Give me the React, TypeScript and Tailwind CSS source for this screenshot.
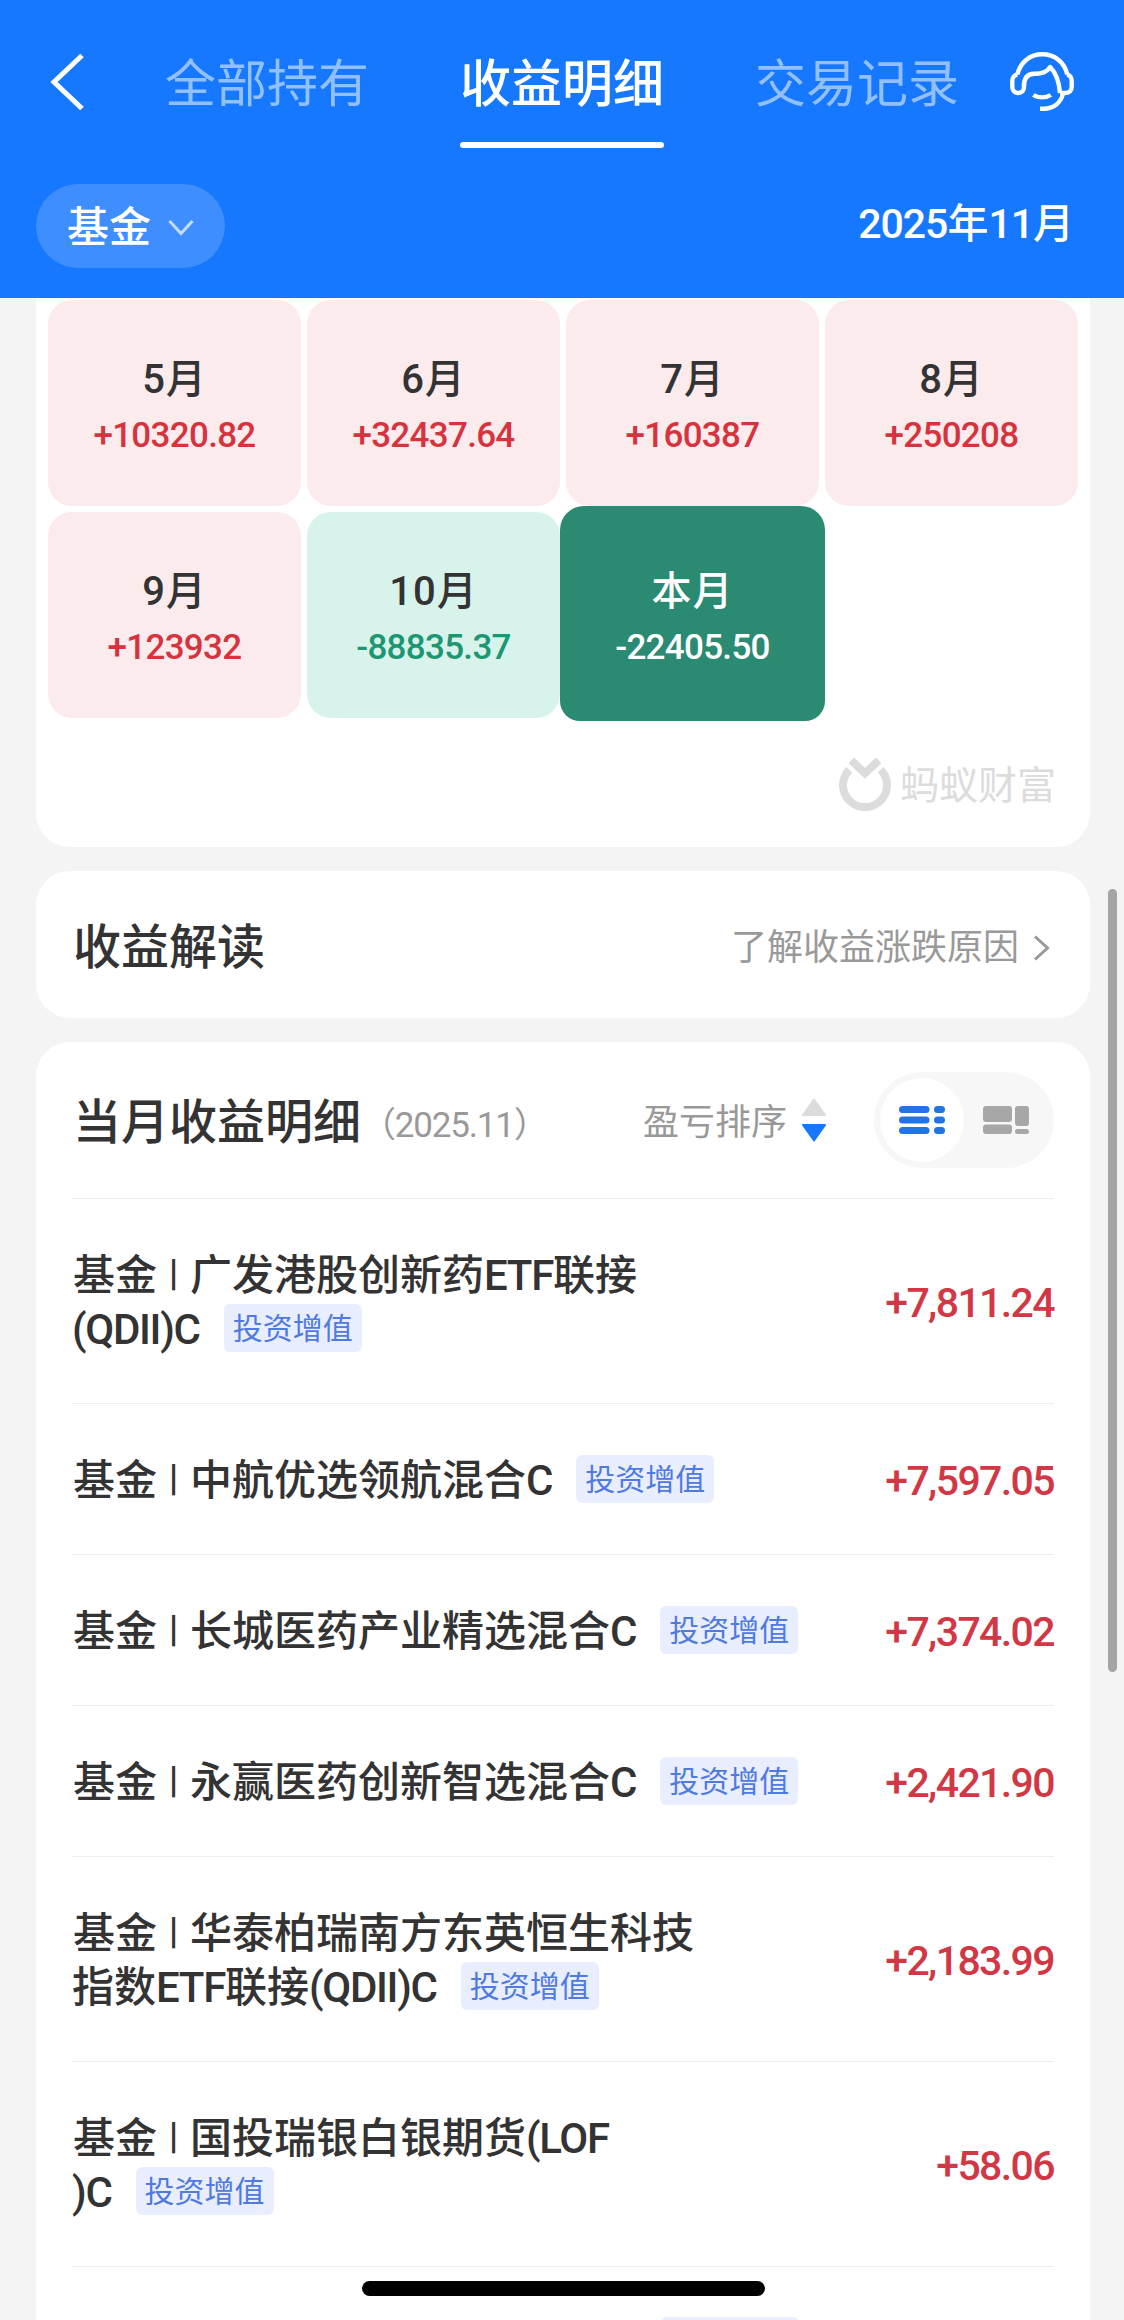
import { Fragment } from "react";
import clsx from "clsx";

type Month = {
  label: string;
  amount: string;
  tone: "up" | "down" | "current";
};

type Fund = {
  lines: string[];
  amount: string;
};

const MONTHS: Month[] = [
  { label: "5月", amount: "+10320.82", tone: "up" },
  { label: "6月", amount: "+32437.64", tone: "up" },
  { label: "7月", amount: "+160387", tone: "up" },
  { label: "8月", amount: "+250208", tone: "up" },
  { label: "9月", amount: "+123932", tone: "up" },
  { label: "10月", amount: "-88835.37", tone: "down" },
  { label: "本月", amount: "-22405.50", tone: "current" },
];

const FUNDS: Fund[] = [
  { lines: ["广发港股创新药ETF联接", "(QDII)C"], amount: "+7,811.24" },
  { lines: ["中航优选领航混合C"], amount: "+7,597.05" },
  { lines: ["长城医药产业精选混合C"], amount: "+7,374.02" },
  { lines: ["永赢医药创新智选混合C"], amount: "+2,421.90" },
  { lines: ["华泰柏瑞南方东英恒生科技", "指数ETF联接(QDII)C"], amount: "+2,183.99" },
  { lines: ["国投瑞银白银期货(LOF", ")C"], amount: "+58.06" },
];

const TABS = ["全部持有", "收益明细", "交易记录"];

// Latin letters and digits are set tighter than the Chinese characters around them
function MixedText({ text }: { text: string }) {
  return (
    <>
      {text.split(/([\x21-\x7e]+)/).map((part, i) =>
        i % 2 === 1 ? (
          <span key={i} className="tracking-[-1.3px]">
            {part}
          </span>
        ) : (
          part
        )
      )}
    </>
  );
}

function HeadsetIcon() {
  return (
    <svg className="h-[60px] w-[64px]" viewBox="0 0 64 60" fill="none" stroke="currentColor" strokeWidth="4.4" strokeLinejoin="round">
      <path d="M7.3 22.5C10.500 10 20 2.300 32.300 2.300S54.500 10 57.300 22.500" />
      <path d="M14 34C14 25.500 18 22 24 21.800C32 21.600 36.500 20.500 40.200 15C46 21 49 28 50 41" />
      <path d="M7.500 22.500C4 23 2.300 26 2.300 29V34.500C2.300 38.500 4.500 41 8.200 41S14 38.500 14 35V31" />
      <path d="M57 22.500C60 23 61.700 26 61.700 29V34.500C61.700 38.500 59.500 41 55.500 41H50" />
      <path d="M53 41C51.500 50.500 43.500 56.700 33.500 56.700H30" />
      <path d="M23.300 43C28 46.200 36 46.200 40.800 43" />
    </svg>
  );
}

function ListIcon() {
  return (
    <svg className="h-[28px] w-[46px]" viewBox="0 0 46 28" fill="#2273e6">
      <rect x="0" y="0" width="30.500" height="7" rx="3.500" />
      <rect x="0" y="10.500" width="30.500" height="7" rx="3.500" />
      <rect x="0" y="21" width="30.500" height="7" rx="3.500" />
      <rect x="35" y="0" width="11" height="7" rx="3.500" />
      <rect x="35" y="10.500" width="11" height="7" rx="3.500" />
      <rect x="35" y="21" width="11" height="7" rx="3.500" />
    </svg>
  );
}

function BlocksIcon() {
  return (
    <svg className="h-[28px] w-[46px]" viewBox="0 0 46 28" fill="#a7a7a7">
      <rect x="0" y="0" width="29" height="16" rx="3" />
      <rect x="0" y="18.500" width="29" height="9.500" rx="3" />
      <rect x="32" y="0" width="14" height="20" rx="3" />
      <rect x="32" y="23" width="14" height="5" rx="2.500" />
    </svg>
  );
}

function Watermark() {
  return (
    <div className="flex items-center text-[#dcdcdc]">
      <svg className="h-[54px] w-[52px]" viewBox="0 0 52 54" fill="none" stroke="currentColor">
        <path d="M10.300 12.700A22 22 0 1 0 41.700 12.700" strokeWidth="8" />
        <path d="M12.300 3.300L26 16.300L39.700 3.300" strokeWidth="8" />
      </svg>
      <span className="ml-[9px] pt-1 text-[39px] leading-[54px] font-normal">蚂蚁财富</span>
    </div>
  );
}

function Tag() {
  return (
    <span className="inline-flex h-[48px] w-[138px] items-center justify-center rounded-[6px] bg-[#e9eeff] pt-[2px] text-[30px] leading-[46px] font-normal text-[#4f7ae2]">
      投资增值
    </span>
  );
}

function Header() {
  return (
    <header className="h-[298px] bg-[#1677ff] text-white">
      <div className="flex h-[164px] items-center pl-[50px]">
        <svg className="h-[56px] w-[34px]" viewBox="0 0 34 56" fill="none" stroke="currentColor" strokeWidth="5">
          <path d="M32 1.500L4 28L32 54.500" />
        </svg>
        <nav className="ml-[81px] flex gap-[91px] pt-[6px]">
          {TABS.map((tab, i) => (
            <div
              key={tab}
              className={clsx(
                "relative w-[204px] text-[51px] leading-[60px]",
                i === 1 ? "font-medium" : "font-normal text-[#92c0ff]"
              )}
            >
              {tab}
              {i === 1 && <span className="absolute top-[87px] left-0 h-[6px] w-full rounded-full bg-white" />}
            </div>
          ))}
        </nav>
        <div className="ml-[51px]">
          <HeadsetIcon />
        </div>
      </div>
      <div className="mt-5 flex items-center justify-between pr-[50px] pl-[36px]">
        <button className="flex h-[84px] w-[189px] items-center rounded-full bg-[#3f8eff] pt-1 pl-[31px] text-[42px] leading-[60px] font-medium">
          基金
          <svg className="ml-[17px] h-[18px] w-[26px]" viewBox="0 0 26 18" fill="none" stroke="#c4ddff" strokeWidth="3">
            <path d="M1.500 2L13 14.500L24.500 2" />
          </svg>
        </button>
        <span className="mb-1 text-[41px] leading-[60px] font-medium">
          <span className="tracking-[-1px]">2025</span>年<span className="tracking-[-1px]">11</span>月
        </span>
      </div>
    </header>
  );
}

function MonthCell({ label, amount, tone }: Month) {
  return (
    <div
      className={clsx(
        "flex flex-col items-center rounded-[24px]",
        tone === "up" && "bg-[#fbebed] pt-[52px] text-[#d6333f]",
        tone === "down" && "bg-[#d8f3ec] pt-[52px] text-[#1d9672]",
        tone === "current" && "-mx-[6px] -mt-[6px] -mb-[3px] rounded-b-[20px] bg-[#2b8a72] pt-[58px] text-white"
      )}
    >
      <span className={clsx("text-[40px] leading-[56px] font-medium tracking-[1px]", tone !== "current" && "text-[#333]")}>
        {label}
      </span>
      <span className="text-[35px] leading-[56px] font-medium tracking-[-0.7px]">{amount}</span>
    </div>
  );
}

function FundRow({ lines, amount }: Fund) {
  return (
    <li className="flex items-center justify-between border-t border-[#eee] pt-[50px] pb-[46px]">
      <div className="text-[42px] leading-[54px] font-medium whitespace-nowrap text-[#333]">
        <span className="ml-px">基金</span>
        <span className="inline-block w-[33px] text-center align-top text-[36px] leading-[49px] font-bold">|</span>
        {lines.map((line, i) => (
          <Fragment key={line}>
            {i > 0 && <br />}
            <MixedText text={line} />
          </Fragment>
        ))}
        <span className="ml-[24px] inline-flex h-[50px] items-center align-top">
          <Tag />
        </span>
      </div>
      <span className="text-[41px] leading-[54px] font-medium tracking-[-1.6px] text-[#d13744]">{amount}</span>
    </li>
  );
}

export default function App() {
  return (
    <div className="relative h-[2320px] w-[1124px] overflow-hidden bg-[#f4f4f5] font-[Roboto,'Noto_Sans_CJK_SC',sans-serif]">
      <Header />

      <main className="flex flex-col gap-6 pr-[34px] pl-[36px]">
        <section className="h-[549px] rounded-b-[34px] bg-white px-[12px] pt-[2px]">
          <div className="grid auto-rows-[206px] grid-cols-4 gap-[6px]">
            {MONTHS.map((month) => (
              <MonthCell key={month.label} {...month} />
            ))}
          </div>
          <div className="mt-[37px] flex justify-end pr-[22px]">
            <Watermark />
          </div>
        </section>

        <section className="flex h-[147px] items-center justify-between rounded-[34px] bg-white pt-[6px] pr-[40px] pl-[37px]">
          <h2 className="text-[48px] leading-[60px] font-medium text-[#333]">收益解读</h2>
          <div className="flex items-center text-[36px] leading-[60px] text-[#999]">
            了解收益涨跌原因
            <svg className="ml-[14px] h-[26px] w-[17px]" viewBox="0 0 17 26" fill="none" stroke="currentColor" strokeWidth="3">
              <path d="M2 1.500L14.500 13L2 24.500" />
            </svg>
          </div>
        </section>

        <section className="h-[1400px] rounded-t-[34px] bg-white px-[36px]">
          <div className="flex h-[156px] items-center">
            <h2 className="pt-[6px] pl-px text-[48px] leading-[60px] font-medium text-[#333]">当月收益明细</h2>
            <span className="mt-3 text-[35px] leading-[60px] font-normal tracking-[-1.2px] text-[#999]">（2025.11）</span>
            <div className="ml-auto flex items-center text-[36px] leading-[60px] text-[#999]">
              <span className="pt-[6px]">盈亏排序</span>
              <svg className="ml-[15px] h-[44px] w-[24px]" viewBox="0 0 24 44">
                <path d="M12 1.500L23 17H1Z" fill="#dcdcdc" stroke="#dcdcdc" strokeLinejoin="round" strokeWidth="2" />
                <path d="M12 42.500L23 27H1Z" fill="#1677ff" stroke="#1677ff" strokeLinejoin="round" strokeWidth="2" />
              </svg>
            </div>
            <div className="ml-[48px] flex h-[96px] w-[180px] items-center rounded-full bg-[#f7f7f7] pl-[6px]">
              <span className="flex h-[84px] w-[84px] items-center justify-center rounded-full bg-white">
                <ListIcon />
              </span>
              <span className="ml-[19px]">
                <BlocksIcon />
              </span>
            </div>
          </div>
          <ul>
            {FUNDS.map((fund) => (
              <FundRow key={fund.amount} {...fund} />
            ))}
            <li className="border-t border-[#eee] pt-[50px] pl-[589px]">
              <span className="block h-[48px] w-[138px] rounded-[6px] bg-[#e9eeff]" />
            </li>
          </ul>
        </section>
      </main>

      {/* scroll thumb */}
      <div className="absolute top-[889px] right-[7px] h-[783px] w-[9px] rounded-full bg-[#a5a5a5]" />
      {/* home indicator */}
      <div className="absolute top-[2281px] left-[362px] h-[15px] w-[403px] rounded-full bg-black" />
    </div>
  );
}
